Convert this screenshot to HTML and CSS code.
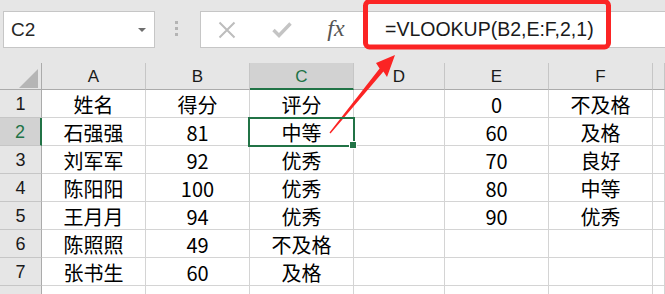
FILE: index.html
```html
<!DOCTYPE html>
<html lang="zh-CN">
  <head>
    <meta charset="UTF-8" />
    <meta name="viewport" content="width=device-width, initial-scale=1.0" />
    <title>VLOOKUP</title>
    <link rel="stylesheet" href="styles.css">
  </head>
  <body>
    <div class="toolbar">
      <div class="name-box">
        <span>C2</span>
        <span class="caret"></span>
      </div>
      <div class="grip"><i></i><i></i><i></i></div>
      <div class="formula-bar">
        <span class="fb-icon fb-cancel">
          <svg width="18" height="18" viewBox="0 0 18 18">
            <path d="M1.5 1.5 L16.5 16.5 M16.5 1.5 L1.5 16.5" stroke="#bdbdbd" stroke-width="2" fill="none" />
          </svg>
        </span>
        <span class="fb-icon fb-enter">
          <svg width="20" height="16" viewBox="0 0 20 16">
            <path d="M1.5 8 L7 13.5 L18.5 1.5" stroke="#c4c4c4" stroke-width="3.4" fill="none" />
          </svg>
        </span>
        <span class="fb-icon fb-fx">fx</span>
        <div class="formula-text">=VLOOKUP(B2,E:F,2,1)</div>
      </div>
    </div>

    <div class="sheet">
      <div class="cell col-head corner"><span class="corner-mark"></span></div>
      <div class="cell col-head">A</div>
      <div class="cell col-head">B</div>
      <div class="cell col-head sel">C</div>
      <div class="cell col-head">D</div>
      <div class="cell col-head">E</div>
      <div class="cell col-head">F</div>
      <div class="cell col-head"></div>

      <div class="cell row-head">1</div>
      <div class="cell">姓名</div>
      <div class="cell">得分</div>
      <div class="cell">评分</div>
      <div class="cell"></div>
      <div class="cell">0</div>
      <div class="cell">不及格</div>
      <div class="cell"></div>

      <div class="cell row-head sel">2</div>
      <div class="cell">石强强</div>
      <div class="cell">81</div>
      <div class="cell active">中等</div>
      <div class="cell"></div>
      <div class="cell">60</div>
      <div class="cell">及格</div>
      <div class="cell"></div>

      <div class="cell row-head">3</div>
      <div class="cell">刘军军</div>
      <div class="cell">92</div>
      <div class="cell">优秀</div>
      <div class="cell"></div>
      <div class="cell">70</div>
      <div class="cell">良好</div>
      <div class="cell"></div>

      <div class="cell row-head">4</div>
      <div class="cell">陈阳阳</div>
      <div class="cell">100</div>
      <div class="cell">优秀</div>
      <div class="cell"></div>
      <div class="cell">80</div>
      <div class="cell">中等</div>
      <div class="cell"></div>

      <div class="cell row-head">5</div>
      <div class="cell">王月月</div>
      <div class="cell">94</div>
      <div class="cell">优秀</div>
      <div class="cell"></div>
      <div class="cell">90</div>
      <div class="cell">优秀</div>
      <div class="cell"></div>

      <div class="cell row-head">6</div>
      <div class="cell">陈照照</div>
      <div class="cell">49</div>
      <div class="cell">不及格</div>
      <div class="cell"></div>
      <div class="cell"></div>
      <div class="cell"></div>
      <div class="cell"></div>

      <div class="cell row-head">7</div>
      <div class="cell">张书生</div>
      <div class="cell">60</div>
      <div class="cell">及格</div>
      <div class="cell"></div>
      <div class="cell"></div>
      <div class="cell"></div>
      <div class="cell"></div>

      <div class="cell row-head"></div>
      <div class="cell"></div>
      <div class="cell"></div>
      <div class="cell"></div>
      <div class="cell"></div>
      <div class="cell"></div>
      <div class="cell"></div>
      <div class="cell"></div>
    </div>

    <!-- red callout drawn over the formula bar and the grid -->
    <svg class="callout" width="665" height="294" viewBox="0 0 665 294">
      <rect x="365.5" y="1.5" width="243" height="45.5" rx="4" fill="none" stroke="#fb2424" stroke-width="5" />
      <polygon points="395,55 387,77 383.4,71.6 330.5,133.4 329.5,132.6 379.6,68.4 376,63" fill="#fb2424" />
    </svg>
  </body>
</html>
```

FILE: styles.css
```css
body {
  margin: 0;
  width: 665px;
  height: 294px;
  overflow: hidden;
  position: relative;
  background: #e6e6e6;
  font-family: "Liberation Sans", "Noto Sans CJK SC", sans-serif;
  color: #222;
}

.toolbar {
  display: flex;
  align-items: flex-start;
  height: 63px;
  padding: 11px 0 0 3px;
  box-sizing: border-box;
}

.name-box {
  width: 152px;
  height: 37px;
  box-sizing: border-box;
  background: #fff;
  border: 1px solid #c6c6c6;
  display: flex;
  align-items: center;
  justify-content: space-between;
  padding: 0 8px 0 7px;
  font-size: 19px;
  color: #262626;
}

.caret {
  width: 0;
  height: 0;
  border-left: 4px solid transparent;
  border-right: 4px solid transparent;
  border-top: 4px solid #6e6e6e;
}

.grip {
  display: flex;
  flex-direction: column;
  gap: 3px;
  margin: 10px 0 0 20px;
}

.grip i {
  display: block;
  width: 3px;
  height: 3px;
  background: #b4b4b4;
}

.formula-bar {
  flex: 1;
  height: 37px;
  margin-left: 22px;
  box-sizing: border-box;
  background: #fff;
  border: 1px solid #c6c6c6;
  border-right: none;
  display: flex;
  align-items: center;
}

.fb-icon {
  display: flex;
  align-items: center;
  justify-content: center;
  height: 100%;
}

.fb-cancel {
  width: 51px;
}

.fb-enter {
  width: 60px;
}

.fb-fx {
  width: 48px;
  font-family: "Liberation Serif", serif;
  font-style: italic;
  font-size: 24px;
  color: #555;
  padding-bottom: 2px;
  box-sizing: border-box;
}

.formula-text {
  padding-left: 25px;
  font-size: 19.5px;
  color: #1a1a1a;
  white-space: nowrap;
}

.sheet {
  display: grid;
  grid-template-columns: 42px 104px 104px 104px 91px 104px 104px 1fr;
  grid-template-rows: 27px;
  grid-auto-rows: 28px;
  background: #fff;
}

.cell {
  box-sizing: border-box;
  border-right: 1px solid #d4d4d4;
  border-bottom: 1px solid #d4d4d4;
  display: flex;
  align-items: center;
  justify-content: center;
  font-family: "Noto Sans CJK SC", sans-serif;
  font-size: 20px;
  line-height: 1;
  color: #000;
  padding-top: 2px;
}

.col-head {
  background: #e6e6e6;
  border-right-color: #c6c6c6;
  border-bottom-color: #ababab;
  font-family: "Liberation Sans", sans-serif;
  font-size: 17px;
  color: #1a1a1a;
  padding-top: 1px;
}

.col-head.sel {
  background: #d2d2d2;
  color: #217346;
  border-bottom: 2px solid #217346;
}

.corner {
  position: relative;
  border-right-color: #ababab;
}

.corner-mark {
  position: absolute;
  right: 3px;
  bottom: 1px;
  width: 19px;
  height: 19px;
  background: #b5b5b5;
  clip-path: polygon(100% 0, 100% 100%, 0 100%);
}

.row-head {
  background: #e6e6e6;
  border-right-color: #ababab;
  border-bottom-color: #c6c6c6;
  font-family: "Liberation Sans", sans-serif;
  font-size: 18px;
  color: #1a1a1a;
  padding-top: 0;
}

.row-head.sel {
  background: #d2d2d2;
  color: #217346;
  border-right: 2px solid #217346;
}

.active {
  position: relative;
  z-index: 1;
}

.active::after {
  content: "";
  position: absolute;
  left: -2px;
  top: -1px;
  right: -2px;
  bottom: -2px;
  border: 2px solid #217346;
}

.active::before {
  content: "";
  position: absolute;
  right: -4px;
  bottom: -4px;
  width: 8px;
  height: 8px;
  box-sizing: border-box;
  background: #217346;
  border: 1px solid #fff;
  z-index: 2;
}

.callout {
  position: absolute;
  left: 0;
  top: 0;
  pointer-events: none;
}
```
